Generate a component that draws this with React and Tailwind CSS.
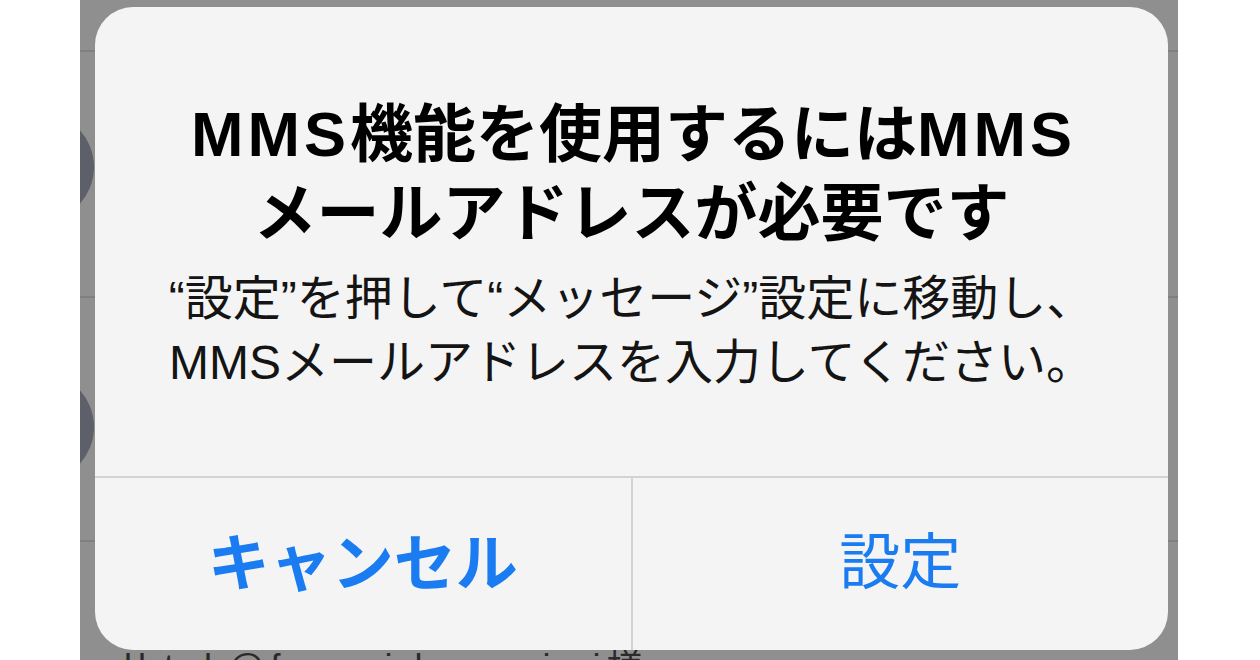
const jp = { fontFamily: '"Liberation Sans", "Noto Sans CJK JP", sans-serif' };

function Backdrop() {
  return (
    <div className="absolute inset-0 pointer-events-none">
      <div className="absolute left-0 right-0 top-[50px] h-[2px] bg-[#7f7f7f]" />
      <div className="absolute left-0 right-0 top-[296px] h-[2px] bg-[#7f7f7f]" />
      <div className="absolute left-0 right-0 top-[540px] h-[2px] bg-[#7f7f7f]" />
      <div className="absolute -left-[96px] top-[112px] w-[110px] h-[110px] rounded-full bg-[#5d6068]" />
      <div className="absolute -left-[96px] top-[372px] w-[110px] h-[110px] rounded-full bg-[#5d6068]" />
    </div>
  );
}

export default function App() {
  return (
    <div className="w-[1260px] h-[660px] bg-white flex overflow-hidden" style={jp}>
      <div className="ml-[80px] w-[1098px] h-[660px] bg-[#8f8f8f] relative flex flex-col overflow-hidden">
        <Backdrop />
        <div className="relative mt-[7px] ml-[15px] w-[1073px] h-[643px] bg-[#f4f4f4] rounded-[38px] flex flex-col overflow-hidden">
          <div className="flex-1 flex flex-col items-center pt-[88px]">
            <h1 className="text-[63px] leading-[79px] font-bold text-black text-center whitespace-nowrap">
              <span className="tracking-[4px]">MMS</span>機能を使用するには<span className="tracking-[4px] mr-[-4px]">MMS</span>
              <br />
              メールアドレスが必要です
            </h1>
            <p className="mt-[14px] text-[48px] leading-[64px] text-[#141414] text-center whitespace-nowrap">
              “設定”を押して“メッセージ”設定に移動し、
              <br />
              MMSメールアドレスを入力してください。
            </p>
          </div>
          <div className="h-[174px] flex border-t-2 border-[#d2d2d2]">
            <button className="flex-1 flex items-center justify-center text-[62px] font-bold text-[#1b7cf2] border-r-2 border-[#d2d2d2]">
              キャンセル
            </button>
            <button className="flex-1 flex items-center justify-center text-[61px] text-[#1b7cf2]">
              設定
            </button>
          </div>
        </div>
        <div className="relative h-[10px] overflow-hidden pl-[44px]">
          <div className="text-[36px] leading-[36px] text-[#2a2a2a] whitespace-nowrap tracking-[6px]">
            lbtzk@fmomi.lamouimi様
          </div>
        </div>
      </div>
    </div>
  );
}
